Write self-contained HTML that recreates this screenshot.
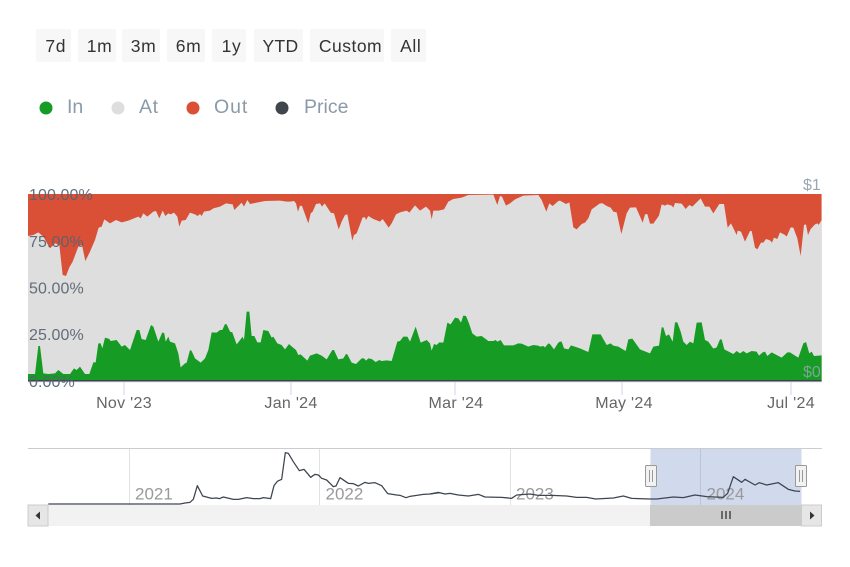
<!DOCTYPE html>
<html><head><meta charset="utf-8"><style>
html,body{margin:0;padding:0;background:#fff}
#r{position:relative;width:850px;height:567px;overflow:hidden;background:#fff;font-family:"Liberation Sans",sans-serif}
.b{position:absolute;top:28.5px;height:33.5px;line-height:35px;background:#f7f7f7;border-radius:2px;color:#333;font-size:17.5px;text-align:center;letter-spacing:.6px;box-sizing:border-box;padding-left:5px}
svg{position:absolute;left:0;top:0}
</style></head><body><div id="r">
<div class="b" style="left:35.5px;width:35.5px">7d</div>
<div class="b" style="left:78px;width:38px">1m</div>
<div class="b" style="left:122px;width:38px">3m</div>
<div class="b" style="left:167px;width:38px">6m</div>
<div class="b" style="left:212px;width:34px">1y</div>
<div class="b" style="left:254px;width:49px;padding-left:4px;letter-spacing:.3px">YTD</div>
<div class="b" style="left:310px;width:74px;padding-left:7px;letter-spacing:.5px">Custom</div>
<div class="b" style="left:391px;width:35px;padding-left:4.5px">All</div>
<svg width="850" height="567" viewBox="0 0 850 567" font-family="'Liberation Sans',sans-serif">
<defs><clipPath id="c"><rect x="28" y="194" width="793.6" height="187"/></clipPath></defs>
<circle cx="46" cy="108" r="6.5" fill="#169c24"/><text x="67" y="113" font-size="19.5" fill="#8a9aa8">In</text>
<circle cx="118" cy="108" r="6.5" fill="#dedede"/><text x="139" y="113" font-size="19.5" fill="#8a9aa8" letter-spacing=".6">At</text>
<circle cx="193" cy="108" r="6.5" fill="#da5037"/><text x="214" y="113" font-size="19.5" fill="#8a9aa8" letter-spacing=".9">Out</text>
<circle cx="282" cy="108" r="6.5" fill="#41464d"/><text x="304" y="113" font-size="19.5" fill="#8a9aa8">Price</text>

<g clip-path="url(#c)">
<rect x="28" y="194" width="794" height="187" fill="#da5037"/>
<g fill="#dedede">
<polygon transform="translate(20,180) scale(.33333)" points="24,168 40,165 55,157 70,170 90,205 105,190 118,195 128,285 138,288 148,262 158,245 175,200 186,195 196,243 210,215 225,180 236,143 245,140 253,118 270,130 288,120 305,127 325,122 355,110 362,115 370,100 382,110 400,95 408,93 418,115 428,92 436,108 445,100 452,103 462,98 472,110 478,140 485,122 497,120 510,98 525,103 533,108 540,102 545,108 552,95 570,92 580,85 600,80 618,70 638,73 643,90 665,68 672,80 682,60 690,72 710,68 735,63 780,62 800,65 810,65 810,700 24,700"/>
<polygon transform="translate(290,180) scale(.33333)" points="0,65 12,63 18,70 24,95 30,77 36,78 55,130 62,100 68,95 78,72 90,70 96,80 104,70 122,98 132,100 146,148 155,125 165,105 172,103 187,182 192,165 200,160 218,112 225,112 228,120 235,108 250,117 270,125 278,117 296,143 305,130 318,103 330,97 350,92 358,98 375,76 390,92 408,80 420,92 425,118 430,92 445,92 462,88 475,65 490,57 515,53 535,45 610,44 622,75 630,48 636,50 648,77 660,70 675,58 700,47 745,45 755,60 769,95 778,70 788,78 805,63 810,62 810,700 0,700"/>
<polygon transform="translate(560,175) scale(.33333)" points="0,77 18,87 28,82 40,157 50,163 65,147 75,143 85,130 95,103 120,85 128,85 140,93 152,98 160,110 170,112 184,177 200,115 210,98 228,97 248,143 255,118 262,117 270,146 280,146 297,122 305,88 315,92 322,88 335,92 340,98 345,84 365,86 377,102 388,90 397,95 422,70 435,95 448,95 460,115 478,87 492,87 503,158 513,145 530,180 533,167 543,170 555,200 570,168 575,168 585,218 592,223 603,203 610,203 618,192 630,196 636,203 642,188 652,192 660,172 675,180 680,185 692,157 700,158 712,190 722,243 732,150 738,148 744,180 752,162 765,148 773,145 776,150 785,135 800,135 800,700 0,700"/>
</g>
<g fill="#169c24">
<polygon transform="translate(20,290) scale(.33333)" points="24,252 45,252 55,168 60,168 70,250 85,252 105,250 115,240 130,252 150,252 162,235 170,240 180,230 195,252 208,252 220,217 227,217 235,160 242,160 247,175 255,143 268,147 272,153 290,150 305,170 315,165 330,180 350,120 358,120 365,147 377,150 393,105 400,110 415,155 427,127 433,130 437,155 445,140 450,155 465,160 475,190 482,232 495,220 500,218 510,180 515,183 525,205 542,218 555,205 565,180 575,127 590,128 600,120 607,120 615,102 620,103 630,125 637,127 650,163 668,140 672,150 680,65 688,65 695,138 703,138 712,157 722,157 730,120 745,123 755,143 760,140 772,160 785,165 795,178 807,162 810,165 810,300 24,300"/>
<polygon transform="translate(290,290) scale(.33333)" points="0,165 18,180 25,195 32,193 52,212 60,197 80,190 95,197 110,208 127,180 132,180 145,208 160,205 168,192 172,193 185,218 198,222 215,205 222,205 228,212 235,205 245,207 257,216 268,210 275,213 290,211 305,213 322,155 330,153 340,140 352,140 360,155 377,110 392,158 410,150 420,160 425,182 432,162 440,165 448,157 460,158 472,98 482,103 495,83 505,85 513,98 520,77 528,78 537,100 547,130 560,140 575,138 595,153 610,153 617,150 622,155 632,150 642,166 670,166 685,160 695,161 715,170 730,165 745,167 750,170 760,168 765,172 775,160 780,162 792,178 805,158 810,155 810,300 0,300"/>
<polygon transform="translate(560,290) scale(.33333)" points="0,155 5,155 12,175 25,178 33,166 60,175 85,186 97,133 122,133 140,165 152,160 160,167 175,170 197,183 205,148 217,146 240,178 270,190 280,170 297,167 305,112 310,112 318,138 327,133 338,155 345,97 352,97 362,125 370,155 380,165 390,155 400,160 410,98 425,97 435,150 445,155 460,176 470,172 480,148 485,148 493,178 520,192 530,183 540,190 550,183 560,190 575,183 590,185 597,197 608,187 615,185 622,198 635,187 650,195 665,203 682,187 690,187 705,197 715,203 730,160 738,156 748,190 755,185 762,198 785,196 800,196 800,300 0,300"/>
</g>
</g>
<rect x="28" y="380" width="793.6" height="1.5" fill="#3e4147"/>
<rect x="28" y="381.5" width="793.6" height="1" fill="#dfe5f2"/>
<g stroke="#ccd6eb" stroke-width="1"><path d="M124 382V395M291 382V395M455 382V395M622 382V395M791 382V395"/></g>
<g font-size="16" fill="#566372" fill-opacity=".92" letter-spacing=".1">
<text x="29" y="200">100.00%</text>
<text x="29" y="247">75.00%</text>
<text x="29" y="293.5">50.00%</text>
<text x="29" y="340">25.00%</text>
<text x="29" y="387">0.00%</text>
</g>
<text x="803" y="190" font-size="16" fill="#9aa6b2">$1</text>
<text x="803" y="377" font-size="16" fill="#9aa6b2" fill-opacity=".8">$0</text>
<g font-size="16" fill="#666" text-anchor="middle" letter-spacing=".3">
<text x="124" y="408">Nov '23</text>
<text x="291" y="408">Jan '24</text>
<text x="456" y="408">Mar '24</text>
<text x="624" y="408">May '24</text>
<text x="791" y="408">Jul '24</text>
</g>

<rect x="28" y="448" width="794" height="1" fill="#ccc"/>
<rect x="650.5" y="449" width="151" height="56" fill="#d1d9ec"/>
<path d="M129.5 449V505M319.5 449V505M510.5 449V505" stroke="#e2e2e2" stroke-width="1" fill="none"/>
<path d="M700.5 449V505" stroke="#b9c4dc" stroke-width="1" fill="none"/>
<g font-size="17" fill="#999">
<text x="135" y="499.3">2021</text>
<text x="325.5" y="499.3">2022</text>
<text x="516" y="499.3">2023</text>
<text x="706.5" y="499.3">2024</text>
</g>
<rect x="28" y="505" width="794" height="21" fill="#f2f2f2"/>
<rect x="650" y="505" width="152" height="21" fill="#cbcbcb"/>
<rect x="28" y="505" width="20" height="21" fill="#e6e6e6" stroke="#ccc" stroke-width="1"/>
<rect x="801.5" y="505" width="20" height="21" fill="#e6e6e6" stroke="#ccc" stroke-width="1"/>
<path d="M40 511.5L35.5 515.5L40 519.5Z" fill="#333"/>
<path d="M810 511.5L814.5 515.5L810 519.5Z" fill="#333"/>
<path d="M722 511V519M726 511V519M730 511V519" stroke="#333" stroke-width="1.3" fill="none"/>
<g fill="none" stroke="#3e4550" stroke-linejoin="round">
<polyline transform="translate(20,440) scale(.33333)" stroke-width="3.8" points="85,192 480,192 495,189 510,187 520,178 532,137 548,168 575,175 590,174 598,176 610,171 640,178 655,178 680,173 700,176 720,176 730,173 752,176 762,137 772,124 785,118 796,38 805,40 820,65 838,92 852,88 872,112 885,103 895,105 905,115 920,120 940,140 948,138 960,113 985,130 1000,131 1015,138 1035,127 1045,130 1065,128 1085,137 1103,161 1130,165 1140,166 1158,173 1170,169 1210,163 1230,162 1260,158"/>
<polyline transform="translate(430,440) scale(.33333)" stroke-width="3.8" points="0,162 25,157 45,162 60,160 85,165 115,168 145,163 165,171 215,172 245,175 260,165 300,162 325,166 365,166 410,168 440,172 470,172 497,177 550,174 580,168 605,175 660,177 680,177 730,171 760,173 795,165 830,170 880,172 893,160 910,110 935,127 945,118 975,135 988,128 1010,135 1045,128 1075,148 1095,153 1110,154"/>
</g>
<g>
<rect x="645.5" y="465.5" width="11" height="21" rx="1" fill="#f2f2f2" stroke="#999"/>
<path d="M649.5 470V482M652.5 470V482" stroke="#999" fill="none"/>
<rect x="795.5" y="465.5" width="11" height="21" rx="1" fill="#f2f2f2" stroke="#999"/>
<path d="M799.5 470V482M802.5 470V482" stroke="#999" fill="none"/>
</g>
</svg>
</div></body></html>
